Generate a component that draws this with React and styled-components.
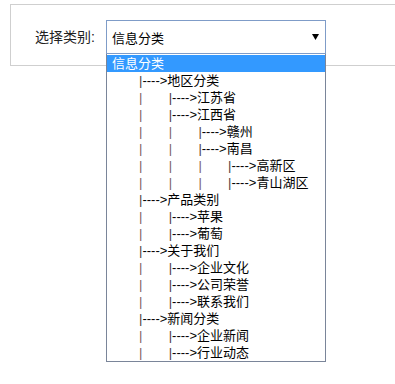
import React from 'react'
import styled, { createGlobalStyle } from 'styled-components'

const GlobalStyle = createGlobalStyle`
  html, body {
    margin: 0;
    padding: 0;
    background: #fff;
  }
  body {
    font-family: "Liberation Sans", Arial, "Noto Sans CJK SC", sans-serif;
    font-size: 13px;
    color: #000;
  }
`

const categories = [
  { name: '信息分类', level: 0 },
  { name: '地区分类', level: 1 },
  { name: '江苏省', level: 2 },
  { name: '江西省', level: 2 },
  { name: '赣州', level: 3 },
  { name: '南昌', level: 3 },
  { name: '高新区', level: 4 },
  { name: '青山湖区', level: 4 },
  { name: '产品类别', level: 1 },
  { name: '苹果', level: 2 },
  { name: '葡萄', level: 2 },
  { name: '关于我们', level: 1 },
  { name: '企业文化', level: 2 },
  { name: '公司荣誉', level: 2 },
  { name: '联系我们', level: 2 },
  { name: '新闻分类', level: 1 },
  { name: '企业新闻', level: 2 },
  { name: '行业动态', level: 2 },
]

const App = () => {
  const selected = 0

  return (
    <>
      <GlobalStyle />
      <Page>
        <Panel>
          <Field>
            <Label>选择类别:</Label>
            <SelectWrap>
              <SelectBox>
                <span>{categories[selected].name}</span>
                <Arrow viewBox='0 0 7 6' width='7' height='6'>
                  <polygon points='0,0 7,0 3.5,6' fill='#000' />
                </Arrow>
              </SelectBox>
              <Dropdown>
                {categories.map((c, i) => (
                  <Option key={i} $level={c.level} $active={i === selected}>
                    {Array.from({ length: Math.max(c.level - 1, 0) }).map((_, j) => (
                      <Guide key={j}>|</Guide>
                    ))}
                    {c.level > 0 && (
                      <Branch>
                        <Pipe>|</Pipe>----&gt;
                      </Branch>
                    )}
                    {c.name}
                  </Option>
                ))}
              </Dropdown>
            </SelectWrap>
          </Field>
        </Panel>
      </Page>
    </>
  )
}

const Page = styled.div`
  height: 384px;
  overflow: hidden;
  padding: 4px 0 0 10px;
  box-sizing: border-box;
`

const Panel = styled.div`
  width: 420px;
  height: 45px;
  border: 1px solid #cfcfcf;
  padding: 15px 0 0 24px;
`

const Field = styled.div`
  display: flex;
  align-items: center;
`

const Label = styled.label`
  width: 71px;
  color: #222;
  font-size: 14px;
  line-height: 34px;
  white-space: nowrap;
`

const SelectWrap = styled.div`
  position: relative;
  width: 220px;
`

const SelectBox = styled.div`
  box-sizing: border-box;
  height: 34px;
  border: 1px solid #7f9cc8;
  background: #fff;
  display: flex;
  align-items: center;
  justify-content: space-between;
  padding: 0 6px 0 5px;
  font-size: 13px;
`

const Arrow = styled.svg`
  display: block;
`

const Dropdown = styled.div`
  position: absolute;
  top: 100%;
  left: 0;
  width: 100%;
  box-sizing: border-box;
  border: 1px solid #7a8599;
  border-top: none;
  background: #fff;
  padding-top: 1px;
`

const Option = styled.div`
  height: 17px;
  line-height: 17px;
  white-space: nowrap;
  overflow: hidden;
  padding-left: ${(p) => (p.$level === 0 ? '5px' : '32px')};
  background: ${(p) => (p.$active ? '#3399ff' : '#fff')};
  color: ${(p) => (p.$active ? '#fff' : '#000')};
  font-size: 13px;
`

const Guide = styled.span`
  display: inline-block;
  width: 29.7px;
  color: #7d5f5f;
`

const Branch = styled.span`
  color: #000;
`

const Pipe = styled.span`
  color: #4a3a3a;
`

export default App
